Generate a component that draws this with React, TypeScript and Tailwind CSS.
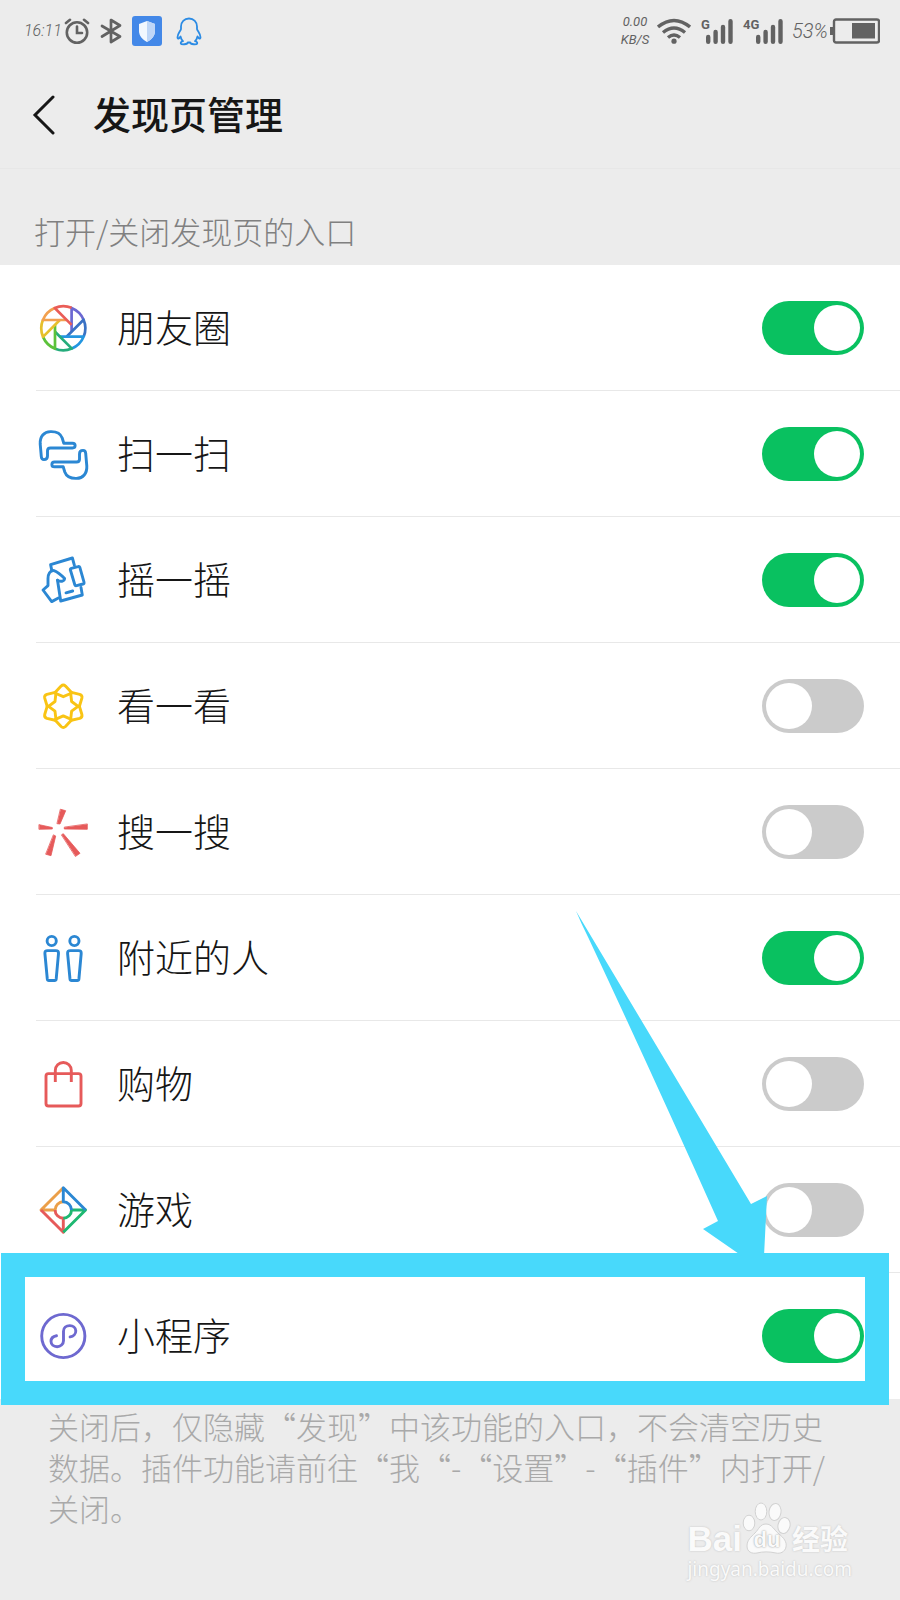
import type { ReactNode } from "react";

const BLUE = "#2b87d3";
const RED = "#e65a5a";

const lensBlades = [
  { angle: 0, color: "#6c68d2" },
  { angle: 45, color: "#3a72c4" },
  { angle: 90, color: "#2496e0" },
  { angle: 135, color: "#25ac7c" },
  { angle: 180, color: "#5cc23a" },
  { angle: 225, color: "#e6c02c" },
  { angle: 270, color: "#f2a04e" },
  { angle: 315, color: "#ea5d57" },
];

function Icon({ children, color = "none" }: { children: ReactNode; color?: string }) {
  return (
    <svg
      viewBox="0 0 48 48"
      className="size-12 shrink-0 overflow-visible"
      fill="none"
      stroke={color}
      strokeWidth="2.9"
      strokeLinecap="round"
      strokeLinejoin="round"
      aria-hidden="true"
    >
      {children}
    </svg>
  );
}

function MomentsIcon() {
  return (
    <Icon>
      <g transform="translate(24.3 24.3)" strokeWidth="2.7">
        {lensBlades.map((b) => (
          <path key={b.angle} transform={`rotate(${b.angle})`} stroke={b.color} strokeLinecap="butt" d="M8.3 3.4V-20.4A22 22 0 0 1 20.3 -8.6" />
        ))}
      </g>
    </Icon>
  );
}

function ScanIcon() {
  const hand = "M8.5 20.8V26C8.5 28.6 7 29.6 5 29.6C3.3 29.6 2.4 28.4 2.3 26.5L1.2 14C.8 6.5 5 1.8 11.5 1.6C17.5 1.4 21.6 3.6 23.2 8L24.8 13.2H33.5C37 13.2 37 18 33.5 18H11.5C9.4 18 8.5 19 8.5 20.8Z";
  return (
    <Icon color={BLUE}>
      <path d={hand} />
      <path transform="rotate(180 24.5 25)" d={hand} />
    </Icon>
  );
}

function ShakeIcon() {
  return (
    <Icon color={BLUE}>
      <path d="M12.6 13.6L11.6 8.6L33.4 2L35.4 9.4" />
      <path d="M32.4 12.3L39 10.6Q40.4 10.2 40.9 11.6L45 26.2Q45.3 27.6 44 28L37.6 29.7Q36.2 30 35.8 28.7L31.4 14Q31 12.7 32.4 12.3Z" />
      <path d="M18.5 24.2L21.7 45L43.3 39L42 31.5" />
      <path d="M18.5 24.2C21.5 26 25.2 25.6 25.6 22.6C23 19.8 18.5 15.8 15 14.6C11 14.2 9 18 9 22.5V29.6L4 34L12.7 45.6L19.4 42" />
      <path d="M27 36.8L33.7 35" />
    </Icon>
  );
}

function LookIcon() {
  return (
    <Icon color="#f9c414">
      <g transform="translate(24.3 24.3)">
        {[0, 60, 120, 180, 240, 300].map((a) => (
          <path key={a} transform={`rotate(${a})`} d="M-8 -14L-2.2 -20.2Q0 -22.2 2.2 -20.2L8 -14L7.4 -12.8L0 -9.6L-7.4 -12.8Z" />
        ))}
      </g>
    </Icon>
  );
}

function SearchIcon() {
  return (
    <Icon>
      <path
        fill={RED}
        stroke={RED}
        strokeWidth=".8"
        d="M21.7 1.3L26.7 2.7L21 16L18.3 15.7ZM.3 16.7L13.3 19.5V21L.3 21.3ZM48.3 16.3V21.3L25.3 21V19.5ZM14.7 27L16.7 28L12 47.7L7 46.3ZM22.7 26.7L24.3 25.7L41 45.3L36.7 48.3Z"
      />
    </Icon>
  );
}

function NearbyIcon() {
  return (
    <Icon color={BLUE}>
      {[0, 22.7].map((x) => (
        <g key={x} transform={`translate(${x} -1)`}>
          <circle cx="12.7" cy="8" r="4.6" />
          <path d="M8.6 17.6H16.8Q19.8 17.6 19.5 20.5L17.2 46Q17 47.5 15.6 47.5H9.9Q8.5 47.5 8.3 46L5.9 20.5Q5.6 17.6 8.6 17.6Z" />
        </g>
      ))}
    </Icon>
  );
}

function ShoppingIcon() {
  return (
    <Icon color={RED}>
      <rect x="7" y="13.6" width="35" height="32.4" rx="2.5" />
      <path strokeLinecap="butt" d="M16.3 22V10.5A8 8 0 0 1 32.3 10.5V22" />
    </Icon>
  );
}

function GameIcon() {
  return (
    <Icon>
      <g transform="translate(24.3 24)">
        {[
          { angle: 270, color: "#eb9f48" },
          { angle: 180, color: RED },
          { angle: 90, color: "#1eb871" },
          { angle: 0, color: BLUE },
        ].map((q) => (
          <path key={q.angle} transform={`rotate(${q.angle})`} stroke={q.color} strokeLinecap="butt" d="M22.3 0L0 -22.3V-8.2A8.2 8.2 0 0 1 8.2 0" />
        ))}
      </g>
    </Icon>
  );
}

function MiniProgramIcon() {
  return (
    <Icon color="#6e69d0">
      <g transform="translate(24.3 24)">
        <circle r="21.6" />
        <path d="M6.8 .9C10.2 .3 12.6 -2.3 12.5 -5.1C12.4 -8.3 9.7 -10.4 6.5 -10.4C2.9 -10.4 .2 -8.2 .2 -4.8V4.8C.2 8.2 -2.8 10.7 -6.2 10.7C-9.6 10.7 -12.3 8.6 -12.3 5.3C-12.3 2.6 -10.2 .3 -6.8 -.3" />
      </g>
    </Icon>
  );
}

const entries = [
  { id: "moments", name: "朋友圈", icon: <MomentsIcon />, on: true },
  { id: "scan", name: "扫一扫", icon: <ScanIcon />, on: true },
  { id: "shake", name: "摇一摇", icon: <ShakeIcon />, on: true },
  { id: "look", name: "看一看", icon: <LookIcon />, on: false },
  { id: "search", name: "搜一搜", icon: <SearchIcon />, on: false },
  { id: "nearby", name: "附近的人", icon: <NearbyIcon />, on: true },
  { id: "shopping", name: "购物", icon: <ShoppingIcon />, on: false },
  { id: "games", name: "游戏", icon: <GameIcon />, on: false },
  { id: "mini", name: "小程序", icon: <MiniProgramIcon />, on: true },
];

function Bars() {
  return (
    <svg viewBox="0 0 27 25" className="h-[25px] w-[27px]" stroke="#626262" strokeWidth="4.4" strokeLinecap="round" aria-hidden="true">
      <path d="M2.2 18V22.8M9.6 13V22.8M17 8V22.8M24.5 2.2V22.8" />
    </svg>
  );
}

function StatusBar() {
  return (
    <div className="flex h-[62px] items-center justify-between pr-5 pl-6 text-[#626262]">
      <div className="flex items-center">
        <span className="w-10 font-['Roboto',sans-serif] text-base font-light italic">16:11</span>
        <svg viewBox="0 0 26 26" className="size-[26px]" fill="none" stroke="currentColor" strokeWidth="2.6" strokeLinecap="round" aria-hidden="true">
          <circle cx="13" cy="14.5" r="10.2" />
          <path d="M13 8.5V15H18M2 5L6 1.8M24 5L20 1.8" />
        </svg>
        <svg viewBox="0 0 22 26" className="ml-[10px] h-[26px] w-[22px]" fill="none" stroke="currentColor" strokeWidth="2.7" strokeLinejoin="round" strokeLinecap="round" aria-hidden="true">
          <path d="M2 8L20 18.5L11 24V2L20 7.5L2 18.5" />
        </svg>
        <svg viewBox="0 0 30 30" className="ml-[10px] size-[30px]" aria-hidden="true">
          <rect width="30" height="30" rx="3" fill="#4388e8" />
          <path d="M15 5L23 8V15C23 20 19.5 23.5 15 26C10.5 23.5 7 20 7 15V8Z" fill="#f2f7fe" />
          <path d="M15 5L23 8V15C23 20 19.5 23.5 15 26Z" fill="#bfd6f7" />
        </svg>
        <svg viewBox="0 0 26 29" className="ml-[14px] h-[29px] w-[26px]" fill="none" stroke="#2b8be4" strokeWidth="1.8" strokeLinejoin="round" aria-hidden="true">
          <path d="M13 1.5C8.2 1.5 5 5 5 9.5V12C4.5 14 1.5 16.8 1.5 20.2C1.5 21.7 2.2 22 3 21.3L4.5 19.5C5 21.8 5.8 23 7 24.2C5.2 24.6 4.5 25.5 4.8 26.5C5.4 27.8 11.5 27.5 11.8 25.5H14.2C14.5 27.5 20.6 27.8 21.2 26.5C21.5 25.5 20.8 24.6 19 24.2C20.2 23 21 21.8 21.5 19.5L23 21.3C23.8 22 24.5 21.7 24.5 20.2C24.5 16.8 21.5 14 21 12V9.5C21 5 17.8 1.5 13 1.5Z" />
        </svg>
      </div>
      <div className="flex items-center">
        <div className="flex w-8 flex-col items-center font-['Roboto',sans-serif] text-[13px] leading-[18px] italic">
          <span>0.00</span>
          <span>KB/S</span>
        </div>
        <svg viewBox="0 0 34 26" className="ml-[6px] h-[26px] w-[34px]" fill="none" stroke="currentColor" strokeWidth="3.4" aria-hidden="true">
          <path d="M1 9Q17 -4 33 9M6 14.5Q17 5.5 28 14.5M11 19.5Q17 14.5 23 19.5" />
          <circle cx="17" cy="23.2" r="2.6" fill="currentColor" stroke="none" />
        </svg>
        <div className="relative ml-[10px] flex h-[25px] w-8 justify-end">
          <span className="absolute -top-px left-0 font-['Roboto'] text-[13px] leading-[14px] font-bold">G</span>
          <Bars />
        </div>
        <div className="relative ml-[10px] flex h-[25px] w-10 justify-end">
          <span className="absolute -top-px left-0 font-['Roboto'] text-[13px] leading-[14px] font-bold">4G</span>
          <Bars />
        </div>
        <span className="ml-[9px] w-[38px] font-['Roboto',sans-serif] text-[20px] font-light italic">53%</span>
        <svg viewBox="0 0 50 26" className="h-[26px] w-[50px]" aria-hidden="true">
          <path d="M0 9H4V17H0Z" fill="#626262" />
          <rect x="4" y="1.5" width="45" height="23" rx="2" fill="none" stroke="#626262" strokeWidth="2.4" />
          <rect x="22" y="5" width="23" height="15.5" fill="#626262" />
        </svg>
      </div>
    </div>
  );
}

function Watermark() {
  return (
    <div className="absolute right-12 bottom-[18px] flex flex-col text-[#fafafa] [text-shadow:0_0_2px_#bdbdbd]">
      <div className="flex items-end">
        <span className="font-['Liberation_Sans'] text-[35px] leading-[34px] font-bold">Bai</span>
        <div className="relative flex h-[54px] w-[50px] justify-center">
          <svg viewBox="0 0 50 54" className="absolute inset-0 size-full" fill="#fafafa" stroke="#d2d2d2" strokeWidth="1" aria-hidden="true">
            <ellipse cx="7" cy="21" rx="5.8" ry="7.8" />
            <ellipse cx="19" cy="9.5" rx="5.8" ry="8.5" />
            <ellipse cx="33" cy="10" rx="6" ry="8.5" transform="rotate(8 33 10)" />
            <ellipse cx="42" cy="23.5" rx="6" ry="8" transform="rotate(14 42 23.5)" />
            <path d="M24 22C30 22 32 28 37 32C42 36 45 40 44 45C43 50 38 52 34 51C27 49.5 21 49.5 15 51C10 52 5 50 5 44C5 38 9 35 13 31C17 27 18 22 24 22Z" />
          </svg>
          <span className="relative mt-auto font-['Liberation_Sans'] text-[22px] leading-[32px] font-bold [text-shadow:0_0_2px_#8a8a8a]">du</span>
        </div>
        <span className="text-[28px] leading-[36px] font-bold">经验</span>
      </div>
      <span className="font-['Noto_Sans'] text-[19px] leading-[26px]">jingyan.baidu.com</span>
    </div>
  );
}

export default function App() {
  return (
    <div lang="zh-CN" className="flex min-h-screen flex-col bg-[#ececec] font-['Noto_Sans_CJK_SC',sans-serif]">
      <StatusBar />
      <header className="flex h-[107px] items-center border-b border-[#e7e7e7] pl-8 text-[#161616]">
        <button type="button" aria-label="返回" className="mr-[37px]">
          <svg viewBox="0 0 24 40" className="h-10 w-6" fill="none" stroke="currentColor" strokeWidth="3" strokeLinecap="round" aria-hidden="true">
            <path d="M21 2L3 20L21 38" />
          </svg>
        </button>
        <h1 className="pb-1 text-[38px] leading-[48px] font-medium">发现页管理</h1>
      </header>
      <h2 className="px-[34px] pt-10 pb-3 text-[31px] leading-[44px] font-light text-[#808080]">打开/关闭发现页的入口</h2>
      <main className="relative z-10">
        <ul className="bg-white">
          {entries.map((e, i) => (
            <li key={e.id} className="pl-9">
              <div className={`flex h-[126px] items-center pr-9 pl-[3px] ${i < entries.length - 1 ? "border-b border-[#e8e8e8]" : ""}`}>
                {e.icon}
                <label htmlFor={e.id} className="ml-[30px] flex-1 pb-1 text-[38px] leading-[54px] font-light text-[#161616]">
                  {e.name}
                </label>
                <input
                  id={e.id}
                  type="checkbox"
                  role="switch"
                  defaultChecked={e.on}
                  className="flex h-[54px] w-[102px] shrink-0 cursor-pointer appearance-none items-center rounded-full bg-[#cbcbcb] p-1 before:size-[46px] before:rounded-full before:bg-white before:content-[''] checked:justify-end checked:bg-[#09c160]"
                />
              </div>
            </li>
          ))}
        </ul>
        <div className="pointer-events-none absolute right-[11px] -bottom-[6px] left-px h-[152px] border-[24px] border-[#48d9fb]" />
        <svg viewBox="0 0 192 345" className="pointer-events-none absolute right-[132px] bottom-[143px] h-[345px] w-48" fill="#48d9fb" aria-hidden="true">
          <path d="M0 0L175 293L191 285L188 345H166L127 318L142 310Q75 160 12 26Q5 12 0 0Z" />
        </svg>
      </main>
      <footer className="relative flex-1 pt-[6px] pr-6 pb-[70px] pl-12 text-[#a9a9a9]">
        <p className="text-[31px] leading-[41px] font-light">
          关闭后，仅隐藏“发现”中该功能的入口，不会清空历史
          <br />
          数据。插件功能请前往“我“-“设置”-“插件”内打开/
          <br />
          关闭。
        </p>
        <Watermark />
      </footer>
    </div>
  );
}
